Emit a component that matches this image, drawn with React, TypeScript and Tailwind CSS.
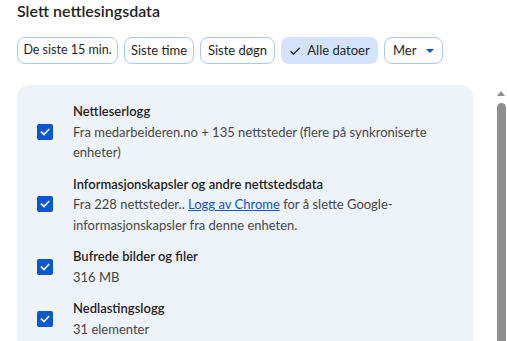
import React from "react";

function Check() {
  return (
    <div className="w-4 h-4 rounded-[2px] bg-[#0b57d0] flex items-center justify-center shrink-0">
      <svg width="12" height="12" viewBox="0 0 12 12">
        <path d="M2.5 6.2 L5 8.6 L9.6 3.6" stroke="white" strokeWidth="1.6" fill="none" strokeLinecap="square" />
      </svg>
    </div>
  );
}

function Item({ title, children }: { title: string; children: React.ReactNode }) {
  return (
    <div className="flex items-center">
      <div className="w-[56px] shrink-0 pl-[20px] flex items-center">
        <Check />
      </div>
      <div className="flex-1 pr-4">
        <div className="text-[13px] leading-[20.5px] font-semibold text-[#1f1f1f]">{title}</div>
        <div className="text-[13px] leading-[20.5px] text-[#474747]">{children}</div>
      </div>
    </div>
  );
}

export default function App() {
  return (
    <div className="w-[507px] h-[341px] overflow-hidden bg-white flex" style={{ fontFamily: 'Lato, sans-serif' }}>
      <div className="w-[473px] shrink-0 pl-[17px]">
        <div className="pt-[1px] text-[16px] leading-[20px] font-semibold text-[#1f1f1f]">Slett nettlesingsdata</div>
        <div className="mt-[16px] flex gap-[6px]">
          <div className="w-[101px] h-[27px] flex items-center justify-center rounded-[8px] border border-[#a8c7fa] text-[12.5px] text-[#1f1f1f] whitespace-nowrap">
            De siste 15 min.
          </div>
          <div className="w-[70px] h-[27px] flex items-center justify-center rounded-[8px] border border-[#a8c7fa] text-[13px] text-[#1f1f1f] whitespace-nowrap">
            Siste time
          </div>
          <div className="w-[75px] h-[27px] flex items-center justify-center rounded-[8px] border border-[#a8c7fa] text-[13px] text-[#1f1f1f] whitespace-nowrap">
            Siste døgn
          </div>
          <div className="w-[97px] h-[27px] flex items-center justify-center gap-[6px] rounded-[8px] bg-[#d3e3fd] text-[13px] text-[#1f1f1f] whitespace-nowrap">
            <svg width="12" height="12" viewBox="0 0 12 12">
              <path d="M1.5 6.2 L4.5 9.2 L10.8 2.9" stroke="#1f1f1f" strokeWidth="1.3" fill="none" />
            </svg>
            Alle datoer
          </div>
          <div className="w-[59px] h-[27px] pl-[8px] flex items-center gap-[10px] rounded-[8px] border border-[#a8c7fa] text-[13px] text-[#1f1f1f] whitespace-nowrap">
            Mer
            <svg width="8" height="4" viewBox="0 0 8 4">
              <path d="M0 0 L8 0 L4 4 Z" fill="#0b57d0" />
            </svg>
          </div>
        </div>
        <div className="mt-[21px] h-[300px] rounded-[12px] bg-[#eef2f9] pt-[16px] flex flex-col gap-[11px]">
          <Item title="Nettleserlogg">Fra medarbeideren.no + 135 nettsteder (flere på synkroniserte enheter)</Item>
          <Item title="Informasjonskapsler og andre nettstedsdata">
            Fra 228 nettsteder.. <span className="text-[#0b57d0] underline">Logg av Chrome</span> for å slette Google-informasjonskapsler fra denne enheten.
          </Item>
          <Item title="Bufrede bilder og filer">316 MB</Item>
          <Item title="Nedlastingslogg">31 elementer</Item>
        </div>
      </div>
      <div className="flex-1 flex justify-end pr-[1px]">
        <div className="w-[10px] flex flex-col items-center pt-[90px]">
          <svg width="10" height="6" viewBox="0 0 10 6">
            <path d="M1 6 L5 1 L9 6 Z" fill="#8f8f8f" />
          </svg>
          <div className="mt-[7px] w-[9px] flex-1 bg-[#8f8f8f] rounded-t-[5px]" />
        </div>
      </div>
    </div>
  );
}
